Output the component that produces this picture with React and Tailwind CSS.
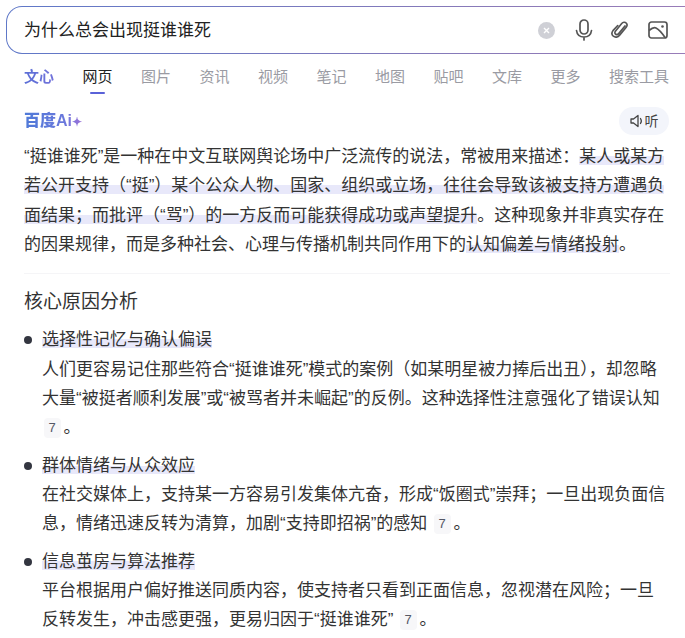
function Hl({ children }) {
  return (
    <span className="bg-[linear-gradient(180deg,transparent_50%,#e8e8fa_50%,#e8e8fa_94%,transparent_94%)] [box-decoration-break:clone]">
      {children}
    </span>
  );
}
function Cite() {
  return (
    <span className="inline-block w-[17px] h-[20px] ml-[1.500px] mr-[3px] text-center align-[1px] text-[13px] leading-[20px] text-[#555866] bg-[#f7f7f9] rounded-[4px]">
      7
    </span>
  );
}
function Item({ title, children }) {
  return (
    <li className="relative pl-[18px]">
      <span className="absolute left-0 top-[11px] w-[8px] h-[8px] rounded-full bg-[#333640]" />
      <div><Hl>{title}</Hl></div>
      <div>{children}</div>
    </li>
  );
}
const tabs = ["网页", "图片", "资讯", "视频", "笔记", "地图", "贴吧", "文库", "更多"];
export default function App() {
  return (
    <div className="w-[685px] h-[638px] overflow-hidden bg-white text-[#333333] font-['Liberation_Sans','Noto_Sans_CJK_SC',sans-serif]">
      <div className="w-[700px] h-[48px] ml-[6px] mt-[6px] p-px rounded-[16px] bg-[linear-gradient(90deg,#5f78c8,#8a7ab8_70%,#9a7cb8)]">
        <div className="h-full bg-white rounded-[15px] flex items-center pl-[17px] w-full">
          <span className="text-[17px] text-[#222222] leading-[24px] w-[514px] mt-[1px]">为什么总会出现挺谁谁死</span>
          <span className="w-[17px] h-[17px] rounded-full bg-[#cfd0d6] flex items-center justify-center">
            <svg width="7" height="7" viewBox="0 0 7 7"><path d="M1 1l5 5M6 1L1 6" stroke="#fff" strokeWidth="1.4" /></svg>
          </span>
          <svg className="ml-[19px]" width="20" height="24" viewBox="0 0 20 24" fill="none" stroke="#555" strokeWidth="1.7" strokeLinecap="round">
            <rect x="6" y="2" width="8" height="14" rx="4" />
            <path d="M2.5 12.5c.5 4 3.500 6.500 7.500 6.500s7-2.500 7.500-6.500M10 19v3" />
          </svg>
          <svg className="ml-[17px]" width="18" height="22" viewBox="0 0 20 22" fill="none" stroke="#555" strokeWidth="1.8" strokeLinecap="round">
            <path d="M15.500 6.500 8.300 15.300c-1 1.200-2.800 1.100-3.600-.1-.6-.9-.4-2 .2-2.800l7-8.600c1.300-1.600 3.700-1.900 5-.5 1.300 1.300 1.100 3.200 0 4.600l-7.300 9c-1.900 2.300-5 2.700-7 1-1.800-1.600-1.900-4.200-.4-6.200L7.500 6" />
          </svg>
          <svg className="ml-[19px]" width="20" height="18" viewBox="0 0 20 18" fill="none" stroke="#555" strokeWidth="1.7" strokeLinejoin="round">
            <rect x="1" y="1" width="18" height="16" rx="2.500" />
            <path d="M1 9.500c3-2.500 5-3.500 7-2.500 3 1.500 6 5 9 9.500" />
            <circle cx="14.500" cy="5.500" r="1.300" fill="#555" stroke="none" />
          </svg>
        </div>
      </div>
      <nav className="flex items-start mt-[11px] ml-[24px] h-[38px]">
        <span className="w-[58.500px] text-[15px] leading-[24px] font-bold bg-[linear-gradient(90deg,#5b6fd6,#8a78e0)] bg-clip-text text-transparent">文心</span>
        {tabs.map((t, i) => (
          <span key={t} className={"relative w-[58.500px] shrink-0 text-[15px] leading-[24px] " + (i === 0 ? "text-[#222222]" : "text-[#9a9ba3]")}>
            {t}
            {i === 0 && <span className="absolute left-[7px] top-[27px] w-[15px] h-[2px] bg-[#5a62d8] rounded-full" />}
          </span>
        ))}
        <span className="shrink-0 text-[15px] leading-[24px] text-[#9a9ba3]">搜索工具</span>
      </nav>
      <div className="flex items-center justify-between ml-[24px] mr-[16px] h-[28px] mt-[4px]">
        <span className="text-[16px] font-black leading-[22px] bg-[linear-gradient(90deg,#4f7ad8,#6a78dc_70%,#9a70d8)] bg-clip-text text-transparent">百度Ai<span className="text-[12px]">✦</span></span>
        <span className="flex items-center justify-center gap-[1px] w-[50px] h-[28px] rounded-[14px] bg-[#f3f5fb] text-[14px] text-[#444]">
          <svg width="14" height="14" viewBox="0 0 14 14" fill="none" stroke="#444" strokeWidth="1.300" strokeLinejoin="round" strokeLinecap="round">
            <path d="M1 5h2.500L8 1.500v11L3.500 9H1zM10.500 4.500c1 1.500 1 3.500 0 5" />
          </svg>
          听
        </span>
      </div>
      <div className="ml-[24px] w-[645px] text-[17px] leading-[29.330px] mt-[7px]">
        <p className="w-[646px] pb-[14px] border-b border-[#f5f5f7]">
          “挺谁谁死”是一种在中文互联网舆论场中广泛流传的说法，常被用来描述：<Hl>某人或某方若公开支持（“挺”）某个公众人物、国家、组织或立场，往往会导致该被支持方遭遇负面结果；而批评（“骂”）的一方反而可能获得成功或声望提升</Hl>。这种现象并非真实存在的因果规律，而是多种社会、心理与传播机制共同作用下的<Hl>认知偏差与情绪投射</Hl>。
        </p>
        <h2 className="text-[19px] font-normal leading-[28px] mt-[14px] mb-[9px]">核心原因分析</h2>
        <ul className="w-[644px] flex flex-col gap-[8px]">
          <Item title="选择性记忆与确认偏误">
            人们更容易记住那些符合“挺谁谁死”模式的案例（如某明星被力捧后出丑），却忽略大量“被挺者顺利发展”或“被骂者并未崛起”的反例。这种选择性注意强化了错误认知 <Cite />。
          </Item>
          <Item title="群体情绪与从众效应">
            在社交媒体上，支持某一方容易引发集体亢奋，形成“饭圈式”崇拜；一旦出现负面信息，情绪迅速反转为清算，加剧“支持即招祸”的感知 <Cite />。
          </Item>
          <Item title="信息茧房与算法推荐">
            平台根据用户偏好推送同质内容，使支持者只看到正面信息，忽视潜在风险；一旦反转发生，冲击感更强，更易归因于“挺谁谁死” <Cite />。
          </Item>
        </ul>
      </div>
    </div>
  );
}
